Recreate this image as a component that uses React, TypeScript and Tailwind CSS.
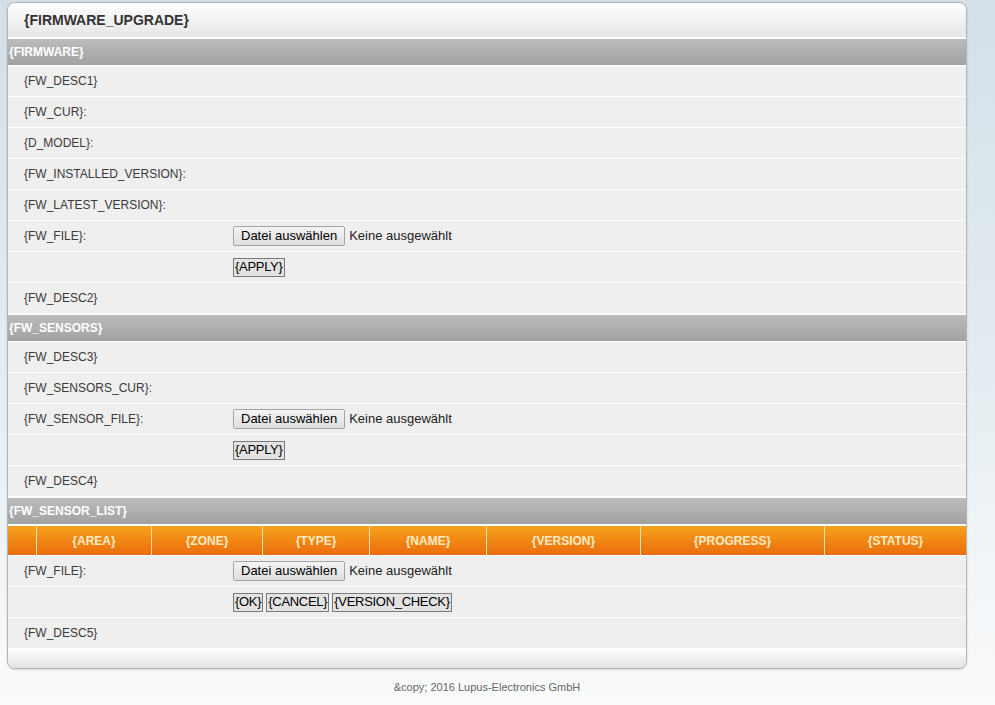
import React from 'react';

const font = "font-['Liberation_Sans',Arial,Helvetica,sans-serif]";

function SectionBar({ title }: { title: string }) {
  return (
    <div className="h-[28px] border-t-2 border-white bg-gradient-to-b from-[#bcbcbc] to-[#a1a1a1] flex items-center pl-px text-[12px] font-bold text-white">
      {title}
    </div>
  );
}

function Row({ label, children }: { label?: string; children?: React.ReactNode }) {
  return (
    <div className="h-[31px] border-t border-white bg-[#efefef] flex items-center text-[12px] text-[#3a3a3a]">
      <div className="w-[225px] pl-4 shrink-0">{label}</div>
      <div className="flex items-center gap-[3px]">{children}</div>
    </div>
  );
}

function FilePicker() {
  return (
    <>
      <span className="h-[20px] px-[7px] border border-[#a3a3a3] rounded-[2px] bg-gradient-to-b from-[#f4f4f4] to-[#dedede] text-[13px] text-black flex items-center">
        Datei auswählen
      </span>
      <span className="ml-px text-[13px] text-[#222]">Keine ausgewählt</span>
    </>
  );
}

function SmallButton({ children }: { children: React.ReactNode }) {
  return (
    <span className="h-[19px] px-px border border-[#7a7a7a] bg-[#e3e3e3] text-[13px] text-black flex items-center tracking-[-0.3px]">
      {children}
    </span>
  );
}

const columns = [
  { name: '', w: 'w-[28px]' },
  { name: '{AREA}', w: 'w-[115px]' },
  { name: '{ZONE}', w: 'w-[111px]' },
  { name: '{TYPE}', w: 'w-[107px]' },
  { name: '{NAME}', w: 'w-[117px]' },
  { name: '{VERSION}', w: 'w-[154px]' },
  { name: '{PROGRESS}', w: 'w-[184px]' },
  { name: '{STATUS}', w: 'w-[142px]' },
];

export default function App() {
  return (
    <div className={`min-h-[705px] bg-gradient-to-b from-[#d3e0e8] via-[#e3ecf1] to-[#fafbfc] ${font}`}>
      <div className="pt-[2px] pl-[7px] w-[967px]">
        <div className="w-[960px] rounded-[8px] border border-[#b3b3b3] overflow-hidden bg-[#efefef] shadow-[0_1px_2px_rgba(0,0,0,0.15)]">
          {/* Header */}
          <div className="h-[34px] bg-gradient-to-b from-[#fefefe] to-[#e6e6e6] flex items-center pl-4 text-[14px] font-bold text-[#333]">
            {'{FIRMWARE_UPGRADE}'}
          </div>

          <SectionBar title="{FIRMWARE}" />
          <Row label="{FW_DESC1}" />
          <Row label="{FW_CUR}:" />
          <Row label="{D_MODEL}:" />
          <Row label="{FW_INSTALLED_VERSION}:" />
          <Row label="{FW_LATEST_VERSION}:" />
          <Row label="{FW_FILE}:">
            <FilePicker />
          </Row>
          <Row>
            <SmallButton>{'{APPLY}'}</SmallButton>
          </Row>
          <Row label="{FW_DESC2}" />

          <SectionBar title="{FW_SENSORS}" />
          <Row label="{FW_DESC3}" />
          <Row label="{FW_SENSORS_CUR}:" />
          <Row label="{FW_SENSOR_FILE}:">
            <FilePicker />
          </Row>
          <Row>
            <SmallButton>{'{APPLY}'}</SmallButton>
          </Row>
          <Row label="{FW_DESC4}" />

          <SectionBar title="{FW_SENSOR_LIST}" />
          {/* Sensor table header */}
          <div className="h-[31px] border-t-2 border-white flex bg-gradient-to-b from-[#f6a11b] to-[#eb6c0d]">
            {columns.map((c, i) => (
              <div
                key={i}
                className={`${c.w} shrink-0 flex items-center justify-center text-[12px] font-bold text-[#fdebc6] ${
                  i > 0 ? 'border-l border-[#fbdcb4]' : ''
                }`}
              >
                {c.name}
              </div>
            ))}
          </div>
          <Row label="{FW_FILE}:">
            <FilePicker />
          </Row>
          <Row>
            <SmallButton>{'{OK}'}</SmallButton>
            <SmallButton>{'{CANCEL}'}</SmallButton>
            <SmallButton>{'{VERSION_CHECK}'}</SmallButton>
          </Row>
          <Row label="{FW_DESC5}" />

          {/* Panel footer */}
          <div className="h-[20px] border-t border-white bg-gradient-to-b from-[#ffffff] to-[#e2e2e2]" />
        </div>

        <p className="mt-[10px] text-center text-[11px] text-[#666]">&amp;copy; 2016 Lupus-Electronics GmbH</p>
      </div>
    </div>
  );
}
